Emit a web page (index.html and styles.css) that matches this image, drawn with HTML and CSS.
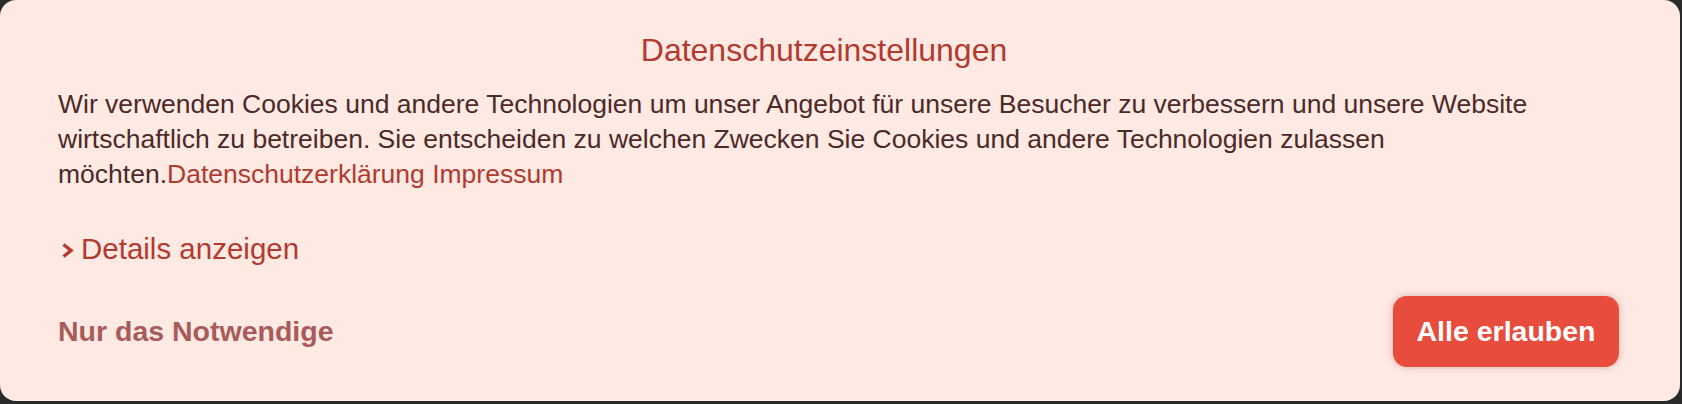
FILE: index.html
```html
<!DOCTYPE html>
<html lang="de">
<head>
    <meta charset="UTF-8">
    <meta name="viewport" content="width=device-width, initial-scale=1.0">
    <title>Datenschutzeinstellungen</title>
    <link rel="stylesheet" href="styles.css">
</head>
<body>
    <div class="consent">
        <h2 class="consent-title">Datenschutzeinstellungen</h2>
        <p class="consent-text">Wir verwenden Cookies und andere Technologien um unser Angebot für unsere Besucher zu verbessern und unsere Website wirtschaftlich zu betreiben. Sie entscheiden zu welchen Zwecken Sie Cookies und andere Technologien zulassen möchten.<a href="#">Datenschutzerklärung</a> <a href="#">Impressum</a></p>
        <a class="details" href="#">
            <svg class="chevron" width="13" height="17" viewBox="0 0 13 17">
                <polyline points="2.5,2.5 10,8.5 2.5,14.5" fill="none" stroke="currentColor" stroke-width="3.4"></polyline>
            </svg>
            Details anzeigen
        </a>
        <div class="actions">
            <button class="btn-plain">Nur das Notwendige</button>
            <button class="btn-accept">Alle erlauben</button>
        </div>
    </div>
</body>
</html>
```

FILE: styles.css
```css
html, body {
    margin: 0;
    padding: 0;
}
body {
    background: #2a2a2a;
    font-family: 'Liberation Sans', Arial, sans-serif;
    width: 1682px;
    height: 404px;
    overflow: hidden;
}
.consent {
    width: 1680px;
    height: 401px;
    box-sizing: border-box;
    background: #fee9e3;
    border-radius: 16px;
    padding: 30px 61px 0 58px;
    display: flex;
    flex-direction: column;
}
.consent-title {
    margin: 0;
    padding-right: 29px;
    font-size: 32px;
    line-height: 40px;
    font-weight: normal;
    text-align: center;
    color: #b23a2f;
}
.consent-text {
    margin: 17px 0 0;
    font-size: 26.5px;
    line-height: 35px;
    color: #4b2a28;
}
.consent-text a {
    color: #b23a2f;
    text-decoration: none;
}
.details {
    margin-top: 39px;
    display: flex;
    align-items: center;
    gap: 7px;
    align-self: flex-start;
    font-size: 29.5px;
    line-height: 36px;
    color: #b23a2f;
    text-decoration: none;
}
.chevron {
    margin-left: 3px;
    margin-top: 2px;
}
.actions {
    margin-top: 29px;
    display: flex;
    justify-content: space-between;
    align-items: center;
}
.actions button {
    font-family: inherit;
    font-size: 28.5px;
    font-weight: bold;
    border: none;
    cursor: pointer;
}
.btn-plain {
    background: none;
    color: #a95b5b;
    padding: 0;
    line-height: 71px;
}
.btn-accept {
    background: #e74c3c;
    color: #ffffff;
    height: 71px;
    padding: 0 23.5px;
    line-height: 71px;
    border-radius: 14px;
    box-shadow: 0 0 7px rgba(140, 70, 60, 0.35);
}
```
